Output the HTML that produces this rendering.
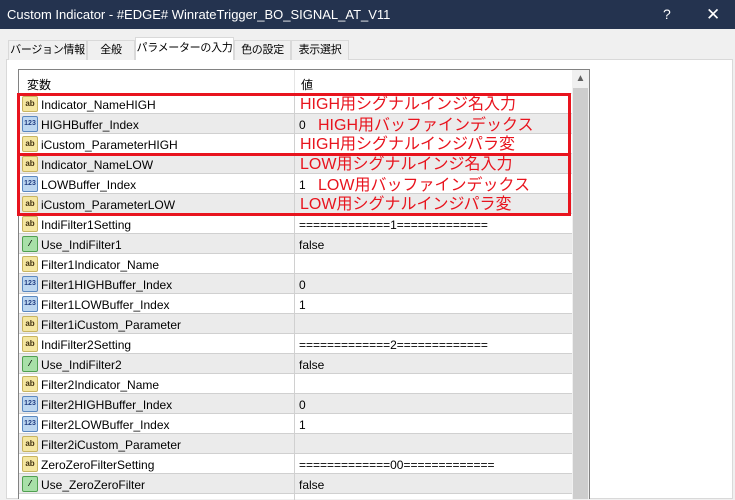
<!DOCTYPE html>
<html><head><meta charset="utf-8"><style>
*{margin:0;padding:0;box-sizing:border-box}
body{width:735px;height:497px;overflow:hidden;background:#f0f0f0;font-family:"Liberation Sans","Noto Sans CJK JP",sans-serif;font-size:12px;color:#000;position:relative}
.title{position:absolute;left:0;top:0;width:735px;height:29px;background:#24334f;color:#fff;font-size:13px;line-height:29px;padding-left:7px}
.title .q{position:absolute;left:663px;top:0;font-size:14px}
.title .x{position:absolute;left:706px;top:0;font-size:17px}
.tab{position:absolute;top:40px;height:20px;border:1px solid #d9d9d9;border-bottom:none;background:#f0f0f0;font-size:11px;line-height:18px;text-align:center;color:#000;white-space:nowrap;letter-spacing:-0.3px;overflow:hidden}
.tab.act{top:37px;height:23px;background:#fff;z-index:2;line-height:20px}
.panel{position:absolute;left:6px;top:59px;width:727px;height:440px;background:#fff;border:1px solid #d9d9d9}
.list{position:absolute;left:18px;top:69px;width:572px;height:430px;border:1px solid #828282;border-bottom:none;background:#fff;overflow:hidden}
.hdr{position:absolute;left:0;top:0;width:553px;height:24px;border-bottom:1px solid #e5e5e5}
.hdr span{position:absolute;top:6px}
.row{position:absolute;left:0;width:553px;height:20px;border-bottom:1px solid #d0d0d0}
.row.g{background:#ebebeb}
.row .n{position:absolute;left:22px;top:4px}
.row .v{position:absolute;left:280px;top:4px}
.row .d{position:absolute;left:275px;top:0;width:1px;height:20px;background:#d0d0d0}
.ic{position:absolute;left:3px;top:2px;width:16px;height:16px;border-radius:2px;font-size:8px;font-weight:bold;text-align:center;line-height:14px}
.ab{background:#f4e6a0;border:1px solid #c8b460;color:#403010}
.nm{background:#bcd6f0;border:1px solid #5a88c0;color:#203c80;font-size:7px}
.bo{background:#a8e0a8;border:1px solid #50a050}
.sb{position:absolute;left:553px;top:0;width:17px;height:430px;background:#f0f0f0}
.sb .th{position:absolute;left:1px;top:18px;width:15px;height:420px;background:#cdcdcd}
.sb .ar{position:absolute;left:0;top:0;width:17px;height:18px;text-align:center;color:#606060;font-size:10px;line-height:18px}
.red{position:absolute;border:3px solid #e8141e;z-index:5}
.rt{position:absolute;color:#e8141e;font-size:16px;line-height:20px;z-index:6;white-space:nowrap}
</style></head><body>
<div class="title">Custom Indicator - #EDGE# WinrateTrigger_BO_SIGNAL_AT_V11<span class="q">?</span><span class="x">✕</span></div>
<div class="panel"></div>
<div class="tab" style="left:8px;width:79px">バージョン情報</div>
<div class="tab" style="left:87px;width:48px">全般</div>
<div class="tab act" style="left:135px;width:99px">パラメーターの入力</div>
<div class="tab" style="left:234px;width:57px">色の設定</div>
<div class="tab" style="left:291px;width:58px">表示選択</div>
<div class="list">
<div class="hdr"><span style="left:8px">変数</span><span style="left:282px">値</span><div style="position:absolute;left:275px;top:0;width:1px;height:24px;background:#e5e5e5"></div></div>
<div class="sb"><div class="ar">▲</div><div class="th"></div></div>
</div>
<div class="red" style="left:17px;top:93px;width:554px;height:63px"></div>
<div class="red" style="left:17px;top:153px;width:554px;height:63px"></div>
<div class="rt" style="left:300px;top:95px">HIGH用シグナルインジ名入力</div>
<div class="rt" style="left:318px;top:116px">HIGH用バッファインデックス</div>
<div class="rt" style="left:300px;top:135px">HIGH用シグナルインジパラ変</div>
<div class="rt" style="left:300px;top:155px">LOW用シグナルインジ名入力</div>
<div class="rt" style="left:318px;top:176px">LOW用バッファインデックス</div>
<div class="rt" style="left:300px;top:195px">LOW用シグナルインジパラ変</div>
<div class="list" style="background:none;border:none;z-index:1;left:19px;top:70px">
<div class="row" style="top:24px"><div class="ic ab">ab</div><span class="n">Indicator_NameHIGH</span><div class="d"></div></div>
<div class="row g" style="top:44px"><div class="ic nm">123</div><span class="n">HIGHBuffer_Index</span><div class="d"></div><span class="v">0</span></div>
<div class="row" style="top:64px"><div class="ic ab">ab</div><span class="n">iCustom_ParameterHIGH</span><div class="d"></div></div>
<div class="row g" style="top:84px"><div class="ic ab">ab</div><span class="n">Indicator_NameLOW</span><div class="d"></div></div>
<div class="row" style="top:104px"><div class="ic nm">123</div><span class="n">LOWBuffer_Index</span><div class="d"></div><span class="v">1</span></div>
<div class="row g" style="top:124px"><div class="ic ab">ab</div><span class="n">iCustom_ParameterLOW</span><div class="d"></div></div>
<div class="row" style="top:144px"><div class="ic ab">ab</div><span class="n">IndiFilter1Setting</span><div class="d"></div><span class="v">=============1=============</span></div>
<div class="row g" style="top:164px"><div class="ic bo">⁄</div><span class="n">Use_IndiFilter1</span><div class="d"></div><span class="v">false</span></div>
<div class="row" style="top:184px"><div class="ic ab">ab</div><span class="n">Filter1Indicator_Name</span><div class="d"></div></div>
<div class="row g" style="top:204px"><div class="ic nm">123</div><span class="n">Filter1HIGHBuffer_Index</span><div class="d"></div><span class="v">0</span></div>
<div class="row" style="top:224px"><div class="ic nm">123</div><span class="n">Filter1LOWBuffer_Index</span><div class="d"></div><span class="v">1</span></div>
<div class="row g" style="top:244px"><div class="ic ab">ab</div><span class="n">Filter1iCustom_Parameter</span><div class="d"></div></div>
<div class="row" style="top:264px"><div class="ic ab">ab</div><span class="n">IndiFilter2Setting</span><div class="d"></div><span class="v">=============2=============</span></div>
<div class="row g" style="top:284px"><div class="ic bo">⁄</div><span class="n">Use_IndiFilter2</span><div class="d"></div><span class="v">false</span></div>
<div class="row" style="top:304px"><div class="ic ab">ab</div><span class="n">Filter2Indicator_Name</span><div class="d"></div></div>
<div class="row g" style="top:324px"><div class="ic nm">123</div><span class="n">Filter2HIGHBuffer_Index</span><div class="d"></div><span class="v">0</span></div>
<div class="row" style="top:344px"><div class="ic nm">123</div><span class="n">Filter2LOWBuffer_Index</span><div class="d"></div><span class="v">1</span></div>
<div class="row g" style="top:364px"><div class="ic ab">ab</div><span class="n">Filter2iCustom_Parameter</span><div class="d"></div></div>
<div class="row" style="top:384px"><div class="ic ab">ab</div><span class="n">ZeroZeroFilterSetting</span><div class="d"></div><span class="v">=============00=============</span></div>
<div class="row g" style="top:404px"><div class="ic bo">⁄</div><span class="n">Use_ZeroZeroFilter</span><div class="d"></div><span class="v">false</span></div>
<div class="row" style="top:424px"><div class="d"></div></div>
</div>
</body></html>
